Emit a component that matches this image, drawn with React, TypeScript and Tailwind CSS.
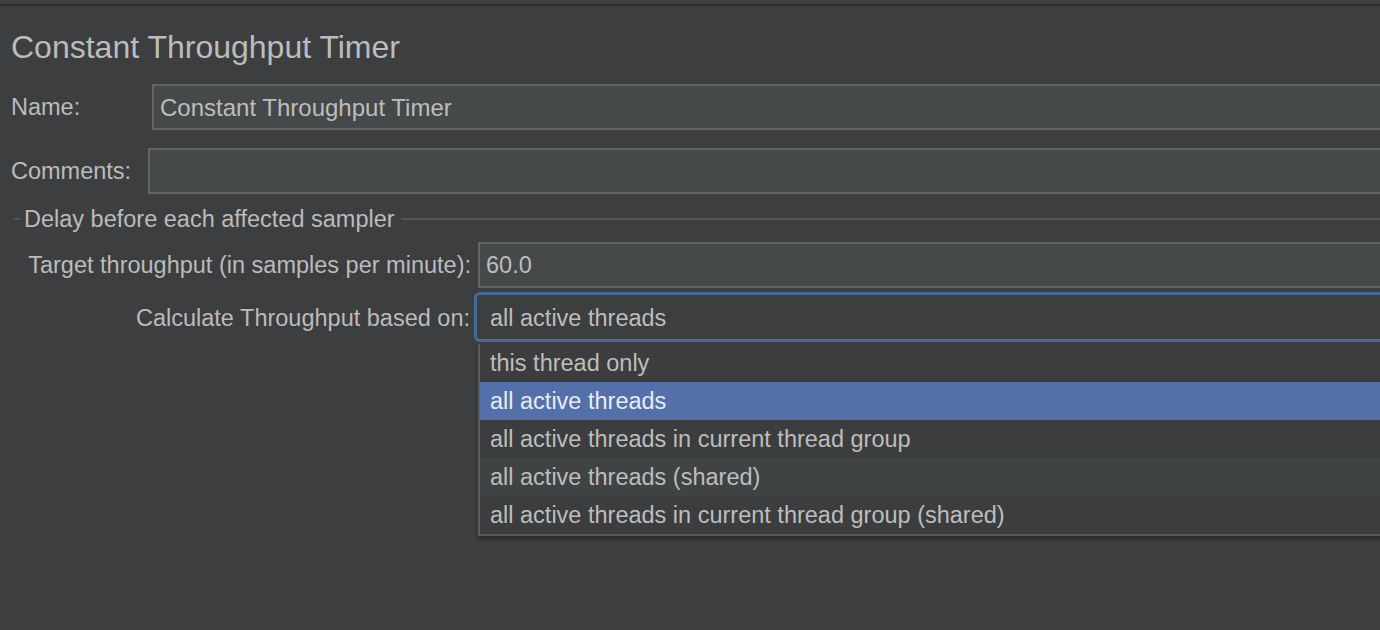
const options = [
  "this thread only",
  "all active threads",
  "all active threads in current thread group",
  "all active threads (shared)",
  "all active threads in current thread group (shared)",
];

const selected = 1;

const App = () => {
  return (
    <div
      className="relative w-[1380px] h-[630px] overflow-hidden bg-[#3d3e40] text-[#bbbbbb] text-[23.5px]"
      style={{ fontFamily: '"Liberation Sans", Arial, sans-serif' }}
    >
      <div className="h-[4px] bg-[#3f4042]" />
      <div className="h-[2px] bg-[#2d2e30]" />

      <h1 className="mt-[21px] pl-[11px] text-[32px] leading-[40px] font-normal text-[#bcbcbc]">
        Constant Throughput Timer
      </h1>

      {/* name / comments */}
      <div className="mt-[17px] flex items-center h-[46px]">
        <label className="w-[152px] pl-[11px] pt-[2px] shrink-0">Name:</label>
        <div className="flex-1 -mr-[10px] h-full flex items-center bg-[#45494a] border-2 border-[#646464] pl-[6px] pt-[2px] text-[24px] text-[#bdbdbd]">
          Constant Throughput Timer
        </div>
      </div>

      <div className="mt-[18px] flex items-center h-[46px]">
        <label className="w-[148px] pl-[11px] pt-[2px] shrink-0">Comments:</label>
        <div className="flex-1 -mr-[10px] h-full bg-[#45494a] border-2 border-[#646464]" />
      </div>

      {/* group: delay */}
      <div className="mt-[13px] flex items-center h-[24px] pl-[14px]">
        <div className="w-[6px] h-[2px] bg-[#555658]" />
        <span className="ml-[4px] pt-[2px] whitespace-nowrap">Delay before each affected sampler</span>
        <div className="ml-[6px] flex-1 h-[2px] bg-[#555658]" />
      </div>

      <div className="mt-[11px] flex items-center h-[46px]">
        <label className="w-[478px] pr-[7px] pt-[2px] text-right shrink-0 whitespace-nowrap">
          Target throughput (in samples per minute):
        </label>
        <div className="flex-1 -mr-[10px] h-full flex items-center bg-[#45494a] border-2 border-[#646464] pl-[6px] pt-[2px] text-[#bdbdbd]">
          60.0
        </div>
      </div>

      <div className="mt-[4px] flex items-center h-[50px]">
        <label className="w-[474px] pr-[4px] pt-[4px] text-right shrink-0 whitespace-nowrap">
          Calculate Throughput based on:
        </label>
        <div className="flex-1 -mr-[10px] h-full flex items-center rounded-[6px] border-[3px] border-[#46699a] bg-[#3d3e40] pl-[13px] pt-[4px] text-[#bdbdbd]">
          all active threads
        </div>
      </div>

      {/* open popup list */}
      <div className="absolute left-[478px] top-[344px] w-[920px] border-x-2 border-b-2 border-[#5a5b5d] bg-[#3c3d3f] shadow-[0_3px_4px_rgba(0,0,0,0.35)]">
        {options.map((opt, i) => (
          <div
            key={opt}
            className={
              i === selected
                ? "h-[38px] flex items-center pl-[10px] pt-[2px] bg-[#5470ab] text-[#e8ebf1]"
                : i === 3
                  ? "h-[38px] flex items-center pl-[10px] pt-[2px] bg-[#404344] text-[#bdbdbd]"
                  : "h-[38px] flex items-center pl-[10px] pt-[2px] text-[#bdbdbd]"
            }
          >
            {opt}
          </div>
        ))}
      </div>
    </div>
  );
};

export default App;
